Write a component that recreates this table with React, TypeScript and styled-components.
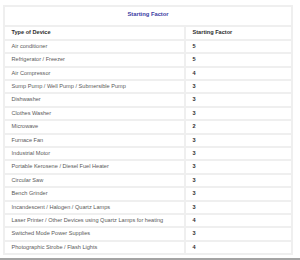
import styled, { createGlobalStyle } from 'styled-components';

const GlobalStyle = createGlobalStyle`
  html, body {
    margin: 0;
    padding: 0;
    background: #ffffff;
  }
  body {
    font-family: "Liberation Sans", Arial, sans-serif;
    width: 300px;
    height: 260px;
    overflow: hidden;
  }
`;

const Page = styled.div`
  width: 300px;
  height: 260px;
  display: flex;
  flex-direction: column;
  padding: 4.7px 0 0 3px;
  box-sizing: border-box;
`;

const Table = styled.table`
  width: 290px;
  border-collapse: separate;
  border-spacing: 2px;
  background: #efefef;
  table-layout: fixed;
`;

const TitleCell = styled.th`
  height: 18.6px;
  box-sizing: border-box;
  background: #ffffff;
  color: #3b3ba3;
  font-size: 5.8px;
  font-weight: 700;
  text-align: center;
  vertical-align: top;
  padding: 4px 0 0;
`;

const Cell = styled.td<{ $head?: boolean; $num?: boolean }>`
  height: 11.4px;
  box-sizing: border-box;
  background: #ffffff;
  padding: 0 0 0 6.5px;
  font-size: 5.6px;
  line-height: 11.4px;
  white-space: nowrap;
  overflow: hidden;
  color: ${(p) => (p.$head || p.$num ? '#2e2e2e' : '#5a5a5a')};
  font-weight: ${(p) => (p.$head || p.$num ? 700 : 400)};
`;

const BottomBar = styled.div`
  margin-top: auto;
  margin-left: -3px;
  height: 2.5px;
  width: 300px;
  background: #a4a4a4;
`;

const rows: [string, number][] = [
  ['Air conditioner', 5],
  ['Refrigerator / Freezer', 5],
  ['Air Compressor', 4],
  ['Sump Pump / Well Pump / Submersible Pump', 3],
  ['Dishwasher', 3],
  ['Clothes Washer', 3],
  ['Microwave', 2],
  ['Furnace Fan', 3],
  ['Industrial Motor', 3],
  ['Portable Kerosene / Diesel Fuel Heater', 3],
  ['Circular Saw', 3],
  ['Bench Grinder', 3],
  ['Incandescent / Halogen / Quartz Lamps', 3],
  ['Laser Printer / Other Devices using Quartz Lamps for heating', 4],
  ['Switched Mode Power Supplies', 3],
  ['Photographic Strobe / Flash Lights', 4],
];

export default function App() {
  return (
    <>
      <GlobalStyle />
      <Page>
        <Table>
          <colgroup>
            <col style={{ width: 179 }} />
            <col />
          </colgroup>
          <thead>
            <tr>
              <TitleCell colSpan={2}>Starting Factor</TitleCell>
            </tr>
          </thead>
          <tbody>
            <tr>
              <Cell $head>Type of Device</Cell>
              <Cell $head>Starting Factor</Cell>
            </tr>
            {rows.map(([name, factor]) => (
              <tr key={name}>
                <Cell>{name}</Cell>
                <Cell $num>{factor}</Cell>
              </tr>
            ))}
          </tbody>
        </Table>
        <BottomBar />
      </Page>
    </>
  );
}
